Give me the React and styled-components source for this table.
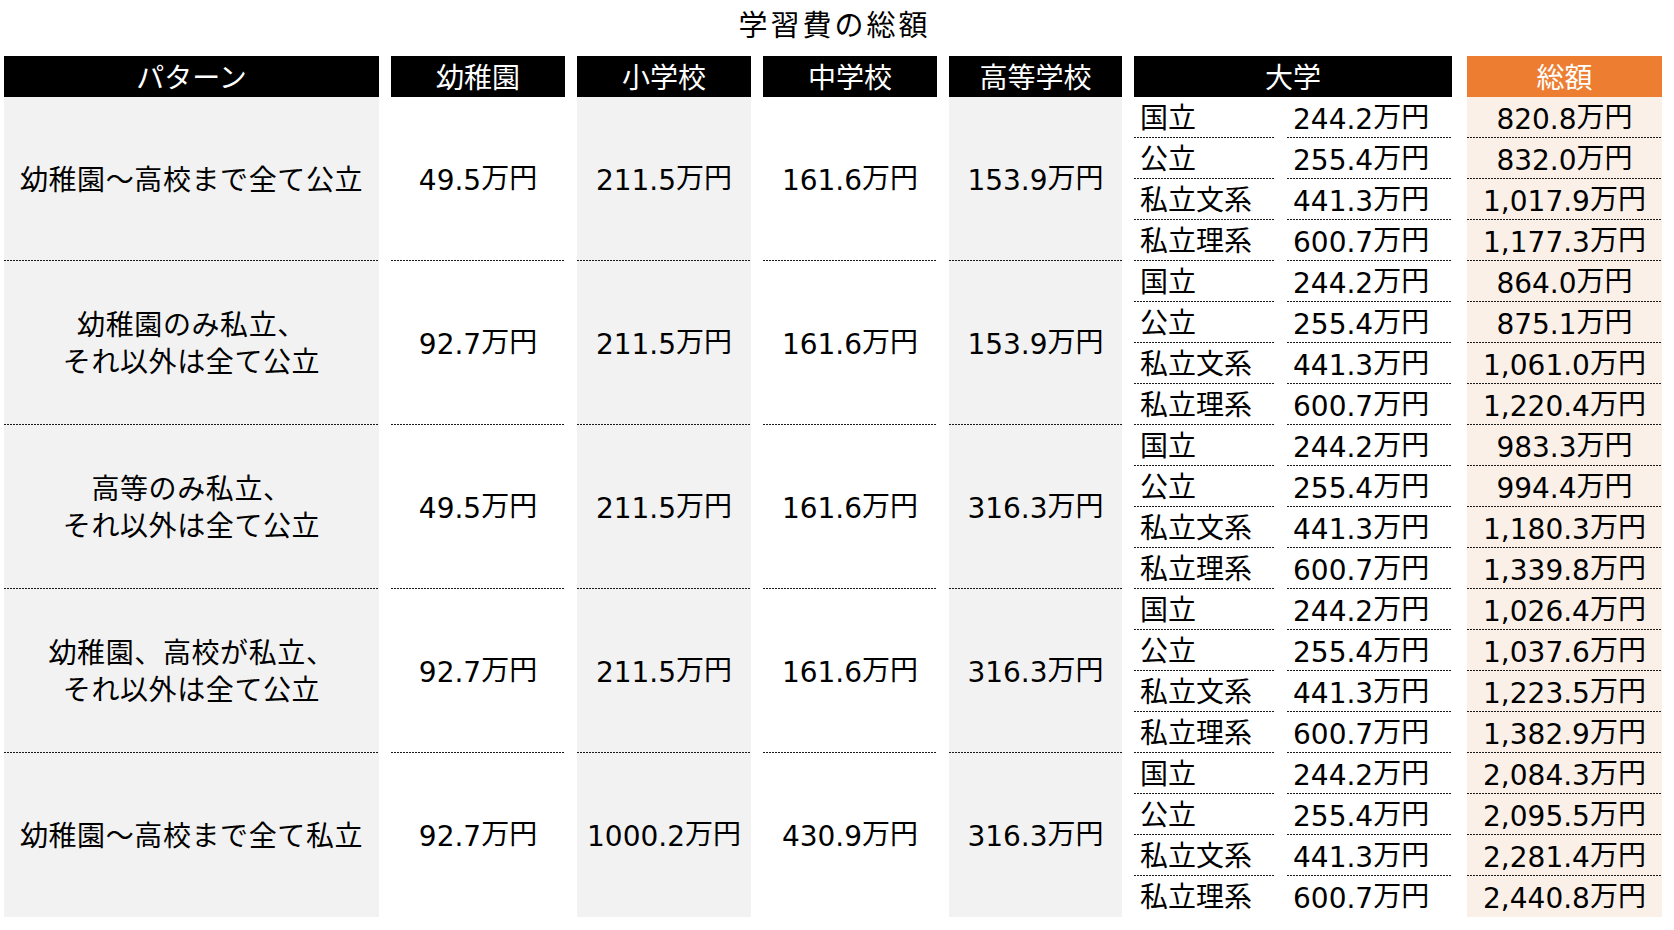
import React from "react";
import styled, { createGlobalStyle, css } from "styled-components";

const GlobalStyle = createGlobalStyle`
  html, body {
    margin: 0;
    padding: 0;
    background: #ffffff;
  }
  body {
    font-family: "DejaVu Sans", "Noto Sans CJK JP", sans-serif;
    color: #000000;
  }
`;

const Page = styled.div`
  width: 1674px;
  height: 930px;
  box-sizing: border-box;
  padding-left: 4px;
`;

const Title = styled.h1`
  width: 1658px;
  height: 56px;
  margin: 0;
  box-sizing: border-box;
  padding-top: 9px;
  text-align: center;
  font-family: "Noto Sans CJK JP", sans-serif;
  font-weight: 400;
  font-size: 29px;
  line-height: 29px;
  letter-spacing: 3px;
  text-indent: 3px;
  color: #000;
`;

const Table = styled.div`
  display: grid;
  grid-template-columns: 375px 174px 174px 174px 173px 141px 165px 198px;
  grid-template-rows: repeat(21, 41px);
  column-gap: 12px;
`;

const tones = {
  grey: "#f2f2f2",
  white: "#ffffff",
  peach: "#fbf0e7",
};

const HeadCell = styled.div`
  grid-column: ${(p) => p.$col} / span ${(p) => p.$span || 1};
  grid-row: 1;
  margin-left: ${(p) => (p.$shift ? "3px" : "0")};
  background: ${(p) => (p.$accent ? "#ed7d31" : "#000000")};
  color: #ffffff;
  display: flex;
  align-items: center;
  justify-content: center;
  font-family: "Noto Sans CJK JP", sans-serif;
  font-size: 28px;
  line-height: 1;
  padding-bottom: 1px;
  box-sizing: border-box;
`;

const dotted = css`
  background-image: linear-gradient(to right, #1a1a1a 2px, transparent 2px);
  background-size: 3px 1px;
  background-repeat: repeat-x;
  background-position: left bottom;
`;

const Cell = styled.div`
  grid-column: ${(p) => p.$col};
  grid-row: ${(p) => p.$row} / span ${(p) => p.$span || 1};
  margin-left: ${(p) => (p.$shift ? "3px" : "0")};
  background-color: ${(p) => tones[p.$tone]};
  ${(p) => p.$dotted && dotted};
  display: flex;
  align-items: center;
  justify-content: ${(p) => (p.$left ? "flex-start" : "center")};
  padding-left: ${(p) => (p.$left ? "6px" : "0")};
  padding-bottom: 2px;
  box-sizing: border-box;
  font-size: 28px;
  line-height: 1;
  white-space: nowrap;
`;

const PatternText = styled.div`
  text-align: center;
  font-family: "Noto Sans CJK JP", sans-serif;
  font-size: 28px;
  line-height: 37px;
  letter-spacing: 0.6px;
  white-space: pre-line;
`;

const Label = styled.span`
  font-family: "Noto Sans CJK JP", sans-serif;
  padding-bottom: 2px;
`;

const Figure = styled.span`
  display: block;
  line-height: 34px;
  padding-top: 1px;
`;

const Digits = styled.span`
  font-family: "DejaVu Sans", sans-serif;
`;

const Unit = styled.span`
  font-family: "Noto Sans CJK JP", sans-serif;
  vertical-align: 2px;
`;

const uniNames = ["国立", "公立", "私立文系", "私立理系"];
const uniValues = ["244.2万円", "255.4万円", "441.3万円", "600.7万円"];

const groups = [
  {
    pattern: "幼稚園～高校まで全て公立",
    kinder: "49.5万円",
    elem: "211.5万円",
    mid: "161.6万円",
    high: "153.9万円",
    totals: ["820.8万円", "832.0万円", "1,017.9万円", "1,177.3万円"],
  },
  {
    pattern: "幼稚園のみ私立、\nそれ以外は全て公立",
    kinder: "92.7万円",
    elem: "211.5万円",
    mid: "161.6万円",
    high: "153.9万円",
    totals: ["864.0万円", "875.1万円", "1,061.0万円", "1,220.4万円"],
  },
  {
    pattern: "高等のみ私立、\nそれ以外は全て公立",
    kinder: "49.5万円",
    elem: "211.5万円",
    mid: "161.6万円",
    high: "316.3万円",
    totals: ["983.3万円", "994.4万円", "1,180.3万円", "1,339.8万円"],
  },
  {
    pattern: "幼稚園、高校が私立、\nそれ以外は全て公立",
    kinder: "92.7万円",
    elem: "211.5万円",
    mid: "161.6万円",
    high: "316.3万円",
    totals: ["1,026.4万円", "1,037.6万円", "1,223.5万円", "1,382.9万円"],
  },
  {
    pattern: "幼稚園～高校まで全て私立",
    kinder: "92.7万円",
    elem: "1000.2万円",
    mid: "430.9万円",
    high: "316.3万円",
    totals: ["2,084.3万円", "2,095.5万円", "2,281.4万円", "2,440.8万円"],
  },
];

const stageCols = [
  { key: "kinder", col: 2, tone: "white" },
  { key: "elem", col: 3, tone: "grey" },
  { key: "mid", col: 4, tone: "white" },
  { key: "high", col: 5, tone: "grey" },
];

function Amount({ value }) {
  const m = value.match(/^(.*?)(万円)$/);
  return (
    <Figure>
      <Digits>{m[1]}</Digits>
      <Unit>{m[2]}</Unit>
    </Figure>
  );
}

export default function App() {
  return (
    <Page>
      <GlobalStyle />
      <Title>学習費の総額</Title>
      <Table>
        <HeadCell $col={1}>パターン</HeadCell>
        <HeadCell $col={2}>幼稚園</HeadCell>
        <HeadCell $col={3}>小学校</HeadCell>
        <HeadCell $col={4}>中学校</HeadCell>
        <HeadCell $col={5}>高等学校</HeadCell>
        <HeadCell $col={6} $span={2}>大学</HeadCell>
        <HeadCell $col={8} $accent $shift>総額</HeadCell>
        {groups.map((g, gi) => {
          const start = 2 + gi * 4;
          const lastGroup = gi === groups.length - 1;
          return (
            <React.Fragment key={gi}>
              <Cell $col={1} $row={start} $span={4} $tone="grey" $dotted={!lastGroup}>
                <PatternText>{g.pattern}</PatternText>
              </Cell>
              {stageCols.map((s) => (
                <Cell
                  key={s.key}
                  $col={s.col}
                  $row={start}
                  $span={4}
                  $tone={s.tone}
                  $dotted={!lastGroup}
                >
                  <Amount value={g[s.key]} />
                </Cell>
              ))}
              {uniNames.map((name, i) => {
                const row = start + i;
                const dot = !(lastGroup && i === 3);
                return (
                  <React.Fragment key={name}>
                    <Cell $col={6} $row={row} $tone="white" $dotted={dot} $left>
                      <Label>{name}</Label>
                    </Cell>
                    <Cell $col={7} $row={row} $tone="white" $dotted={dot} $left>
                      <Amount value={uniValues[i]} />
                    </Cell>
                    <Cell $col={8} $row={row} $tone="peach" $dotted={dot} $shift>
                      <Amount value={g.totals[i]} />
                    </Cell>
                  </React.Fragment>
                );
              })}
            </React.Fragment>
          );
        })}
      </Table>
    </Page>
  );
}
